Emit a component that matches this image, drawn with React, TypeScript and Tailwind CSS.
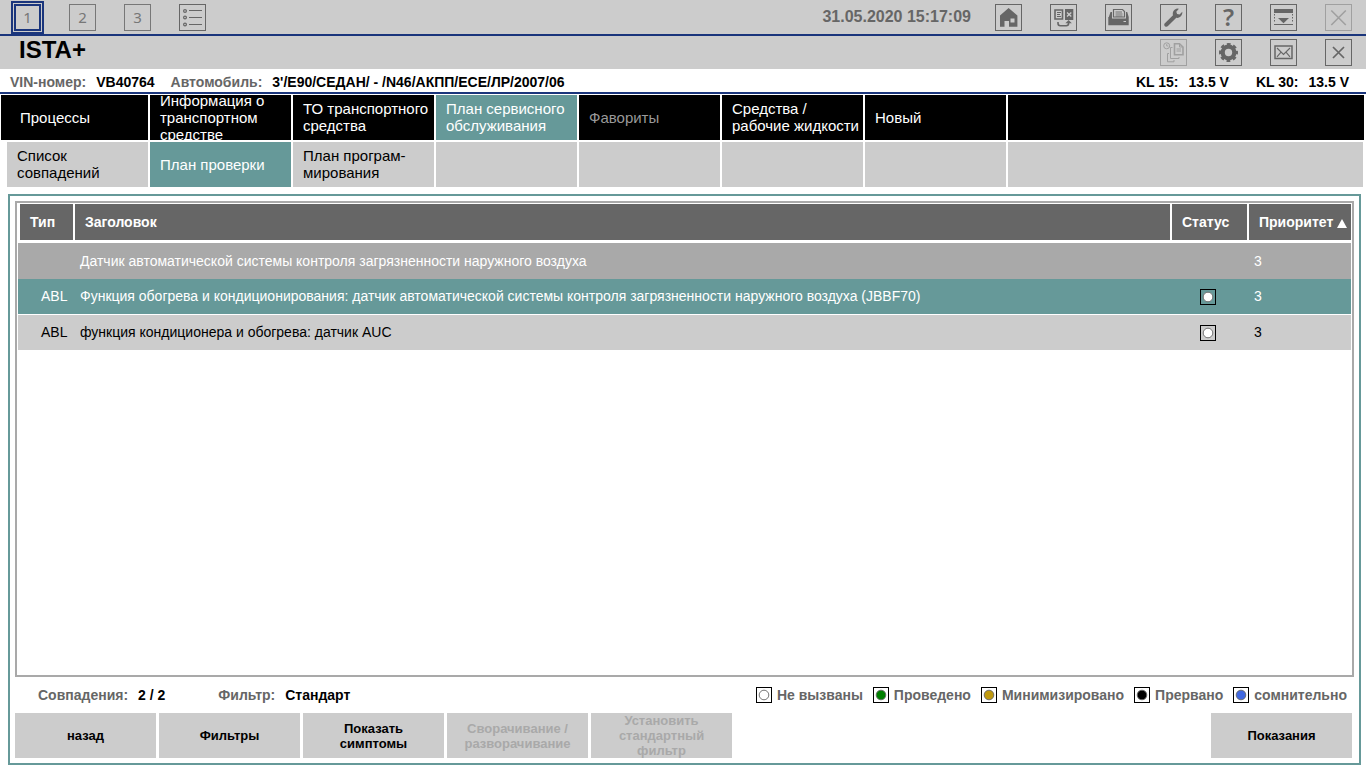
import type { ReactNode } from 'react';
import clsx from 'clsx';

type NavItem = { label: string; active?: boolean; disabled?: boolean };

const mainNav: NavItem[] = [
  { label: 'Процессы' },
  { label: 'Информация о транспортном средстве' },
  { label: 'ТО транспортного средства' },
  { label: 'План сервисного обслуживания', active: true },
  { label: 'Фавориты', disabled: true },
  { label: 'Средства / рабочие жидкости' },
  { label: 'Новый' },
];

const subNav: NavItem[] = [
  { label: 'Список совпадений' },
  { label: 'План проверки', active: true },
  { label: 'План програм-\nмирования' },
];

const rows = [
  { type: '', title: 'Датчик автоматической системы контроля загрязненности наружного воздуха', priority: 3, tone: 'h-9 bg-[#a9a9a9] text-white' },
  {
    type: 'ABL',
    title: 'Функция обогрева и кондиционирования: датчик автоматической системы контроля загрязненности наружного воздуха (JBBF70)',
    priority: 3,
    tone: 'h-9 bg-[#669999] text-white',
  },
  { type: 'ABL', title: 'функция кондиционера и обогрева: датчик AUC', priority: 3, tone: 'h-[35px] bg-[#cccccc] text-black' },
];

const legend = [
  { label: 'Не вызваны', fill: '#ffffff' },
  { label: 'Проведено', fill: '#008000' },
  { label: 'Минимизировано', fill: '#c09a10' },
  { label: 'Прервано', fill: '#000000' },
  { label: 'сомнительно', fill: '#4169e1' },
];

const actions = [
  { label: 'назад' },
  { label: 'Фильтры' },
  { label: 'Показать симптомы' },
  { label: 'Сворачивание / разворачивание', disabled: true },
  { label: 'Установить стандартный фильтр', disabled: true },
];

function IconButton({ label, disabled, children }: { label: string; disabled?: boolean; children: ReactNode }) {
  return (
    <button
      type="button"
      aria-label={label}
      disabled={disabled}
      className={clsx('size-[27px] shrink-0 border', disabled ? 'border-[#a0a0a0] text-[#a0a0a0]' : 'border-[#666666] text-[#666666]')}
    >
      <svg viewBox="1 1 25 25" className="size-[25px]" fill="none" stroke="currentColor">
        {children}
      </svg>
    </button>
  );
}

function StatusDot({ fill }: { fill: string }) {
  return (
    <svg viewBox="0 0 16 16" className="size-4 shrink-0">
      <rect x="0.5" y="0.5" width="15" height="15" fill="none" stroke="#000000" />
      <circle cx="8" cy="8" r="4.8" fill={fill} stroke="#666666" strokeWidth="0.9" />
    </svg>
  );
}

function TopBar() {
  return (
    <div className="flex h-9 items-center justify-between border-b-2 border-[#1a357c] bg-[#cccccc] pr-[14px] pl-[11px]">
      <div className="flex items-center gap-7 font-['Noto_Sans','Open_Sans',sans-serif] text-[15px] text-[#777777]">
        <button type="button" className="-mr-[3px] flex size-[33px] items-center justify-center border-2 border-[#1a357c] p-px">
          <span className="flex size-full items-center justify-center border-2 border-[#1a357c]">1</span>
        </button>
        <button type="button" className="size-[27px] border border-[#777777]">2</button>
        <button type="button" className="size-[27px] border border-[#777777]">3</button>
        <IconButton label="Список">
          <g strokeWidth="1.2">
            <circle cx="6" cy="7" r="1.4" />
            <circle cx="6" cy="13.5" r="1.4" />
            <circle cx="6" cy="20.5" r="1.4" />
            <path d="M10 6.5h13M10 13.5h13M10 20.5h13" strokeWidth="1" />
          </g>
        </IconButton>
      </div>
      <div className="flex items-center gap-7">
        <time className="-mr-1 text-base font-bold text-[#666666]">31.05.2020 15:17:09</time>
        <IconButton label="Домой">
          <path
            d="M13.6 4 22.4 11.5V22.7H14V17H9.5V22.7H5V11.5ZM15.5 14.5V18.5H19.5V14.5Z"
            fill="currentColor"
            fillRule="evenodd"
            stroke="none"
          />
        </IconButton>
        <IconButton label="Сменить операцию">
          <path d="M5 6h7.5v9H5Z" strokeWidth="1.6" />
          <path d="M7 8.5h4M7 10.5h3M7 12.5h4" strokeWidth="1" />
          <path d="M15 5h8.3v11H15Z" fill="currentColor" stroke="none" />
          <path d="m17 8.5 4.3 4M21.3 8.5l-4.3 4" stroke="#cccccc" strokeWidth="1.3" />
          <path d="M8 18v1.3q0 2.4 2.4 2.4h5.8q2.4 0 2.4-2.4V18" strokeWidth="1.6" />
          <path d="m15.4 19.3 3.2-3.2 3.2 3.2Z" fill="currentColor" stroke="none" />
        </IconButton>
        <IconButton label="Печать">
          <path d="M8.5 5.5h9l2 2V13h-11Z" strokeWidth="1.2" />
          <path d="M10.5 8h6.5M10.5 10h7M10.5 12h7" strokeWidth="0.9" />
          <path d="M5.5 8H7v5H3.8ZM21 8h1.2l1.5 5H21Z" fill="currentColor" stroke="none" />
          <path d="M3.3 13H7v1.5h14V13h2.7v8.3H3.3Z" fill="currentColor" stroke="none" />
          <path d="M18.5 17.5h2.5" stroke="#cccccc" />
        </IconButton>
        <IconButton label="Настройки инструмента">
          <path
            d="M4.6 19.4 13 11.3c-.8-3 .8-6 4-6.8l1.9.2-2.6 3.1.8 2.2 2.4.6 2.8-2.8c.4 3.6-2.4 6.6-6 6L7.7 22.3c-2 1.4-4.4-.9-3.1-2.9Z"
            fill="currentColor"
            stroke="none"
          />
        </IconButton>
        <button
          type="button"
          aria-label="Справка"
          className="flex size-[27px] shrink-0 items-center justify-center border border-[#666666] font-['Noto_Sans',sans-serif] text-2xl font-semibold text-[#666666]"
        >
          ?
        </button>
        <IconButton label="Свернуть">
          <path d="M4 5h19v4H4Z" fill="currentColor" stroke="none" />
          <path d="M4.5 10v9M22.5 10v9" strokeDasharray="1.5 1.5" />
          <path d="M8 14h11l-5.5 5.2Z" fill="currentColor" stroke="none" />
          <path d="M4 20.5h19" />
        </IconButton>
        <IconButton label="Закрыть программу" disabled>
          <path d="m6.3 6.5 14.5 14.5M20.8 6.5 6.3 21" strokeWidth="1.6" />
        </IconButton>
      </div>
    </div>
  );
}

function TitleBar() {
  return (
    <div className="flex h-[33px] items-center justify-between bg-[#cccccc] pr-[14px] pl-[19px]">
      <h1 className="-mt-1.5 text-2xl leading-7 font-bold">ISTA+</h1>
      <div className="flex items-center gap-7">
        <IconButton label="Документы операции" disabled>
          <circle cx="6.7" cy="6.8" r="3" />
          <path d="M6.7 5V7H8.3" strokeWidth="0.9" />
          <path d="M14.5 4.7h5l3.5 3.3v7.7h-8.5Z" strokeWidth="1.6" />
          <path d="M19.5 4.7V8H23M16.5 10h4.5M16.5 12h4.5" strokeWidth="1" />
          <path d="M12.5 8.5h-2v11H19V18M9 14.5H7.5v8.3H14V21" />
        </IconButton>
        <IconButton label="Настройки">
          <circle cx="13.5" cy="13.5" r="5.8" strokeWidth="4.2" />
          <circle cx="13.5" cy="13.5" r="8" strokeWidth="3" strokeDasharray="3.6 2.68" strokeDashoffset="1.8" />
        </IconButton>
        <IconButton label="Сообщения">
          <path d="M5 7h17v12.5H5Z" strokeWidth="1.5" />
          <path d="m7 9 6.5 6.5L20 9M7 17.8l3.8-4.5M20 17.8l-3.8-4.5" strokeWidth="1.1" />
        </IconButton>
        <IconButton label="Закрыть">
          <path d="m8 8 11 11M19 8 8 19" strokeWidth="1.7" />
        </IconButton>
      </div>
    </div>
  );
}

function VehicleBar() {
  return (
    <div className="flex h-[25px] items-center justify-between border-b-2 border-[#1a357c] pt-0.5 pr-[17px] pl-[10px] text-sm font-bold">
      <div className="flex">
        <span className="text-[#666666]">VIN-номер:</span>
        <span className="ml-[10px]">VB40764</span>
        <span className="ml-4 text-[#666666]">Автомобиль:</span>
        <span className="ml-[10px]">3'/E90/СЕДАН/ - /N46/АКПП/ECE/ЛР/2007/06</span>
      </div>
      <div className="flex">
        <span>KL 15:</span>
        <span className="ml-[10px]">13.5 V</span>
        <span className="ml-[27px]">KL 30:</span>
        <span className="ml-[10px]">13.5 V</span>
      </div>
    </div>
  );
}

function NavCell({ item, tone, className = 'w-[141px] pl-[10px]' }: { item: NavItem; tone: string; className?: string }) {
  return (
    <button
      type="button"
      disabled={item.disabled}
      className={clsx(
        'flex h-[45px] shrink-0 items-center overflow-hidden pb-px text-left text-[15px] leading-[17px] whitespace-pre-line',
        className,
        item.active ? 'bg-[#669999] text-white' : tone,
        item.disabled && 'text-[#999999]',
      )}
    >
      {item.label}
    </button>
  );
}

function Navigation() {
  return (
    <nav className="mt-px flex flex-col gap-0.5 pr-[3px]">
      <div className="-mr-px flex gap-0.5 pl-px">
        <NavCell item={mainNav[0]} tone="bg-black text-white" className="w-[147px] pl-[19px]" />
        {mainNav.slice(1).map((item) => (
          <NavCell key={item.label} item={item} tone={item.disabled ? 'bg-black' : 'bg-black text-white'} />
        ))}
        <div className="flex-1 bg-black" />
      </div>
      <div className="flex gap-0.5 pl-[7px]">
        {subNav.map((item) => (
          <NavCell key={item.label} item={item} tone="bg-[#cccccc] text-black" />
        ))}
        {[0, 1, 2, 3].map((n) => (
          <div key={n} className="w-[141px] shrink-0 bg-[#cccccc]" />
        ))}
        <div className="flex-1 bg-[#cccccc]" />
      </div>
    </nav>
  );
}

function PlanTable() {
  const th = 'h-[39px] border-b-[3px] border-l-2 border-white bg-[#666666] pl-[10px] text-left font-bold text-white';
  return (
    <div className="flex-1 border-2 border-[#a9a9a9] p-px">
      <table className="w-full table-fixed border-separate border-spacing-0 text-sm leading-5">
        <thead>
          <tr>
            <th className={clsx(th, 'w-[55px]')}>Тип</th>
            <th className={th}>Заголовок</th>
            <th className={clsx(th, 'w-[77px]')}>Статус</th>
            <th className={clsx(th, 'w-[104px]')}>
              <div className="flex items-center gap-1">
                Приоритет
                <svg viewBox="0 0 10 9" className="mt-0.5 h-[9px] w-[10px] shrink-0">
                  <path d="M5 0 10 9H0Z" fill="#ffffff" />
                </svg>
              </div>
            </th>
          </tr>
        </thead>
        <tbody>
          {rows.map((row, i) => {
            const line = i === 1 && 'border-b border-white';
            const cell = clsx(line, i > 0 && 'pb-px');
            return (
              <tr key={row.title} className={row.tone}>
                <td className={clsx(cell, 'pl-[23px]')}>{row.type}</td>
                <td className={clsx(cell, 'pl-[7px]')}>{row.title}</td>
                <td className={clsx(line, 'pl-[30px]')}>{row.type && <StatusDot fill="#ffffff" />}</td>
                <td className={clsx(cell, 'pl-[7px]')}>{row.priority}</td>
              </tr>
            );
          })}
        </tbody>
      </table>
    </div>
  );
}

function ActionButton({ label, disabled }: { label: string; disabled?: boolean }) {
  return (
    <button
      type="button"
      disabled={disabled}
      className={clsx(
        'flex h-[45px] w-[141px] items-center justify-center overflow-hidden bg-[#cccccc] px-3 text-center text-[13px] leading-[15px] font-bold',
        disabled ? 'text-[#a9a9a9]' : 'text-black',
      )}
    >
      {label}
    </button>
  );
}

export default function App() {
  return (
    <div className="flex min-h-screen flex-col bg-white font-['Liberation_Sans',Arial,sans-serif] text-black">
      <header>
        <TopBar />
        <TitleBar />
        <VehicleBar />
      </header>
      <Navigation />
      <main className="mt-[7px] mr-[5px] mb-[3px] ml-2 flex flex-1 flex-col border-2 border-[#669999] p-[5px]">
        <PlanTable />
        <div className="flex h-9 items-center justify-between pr-[7px] pl-[23px] text-sm font-bold text-[#666666]">
          <div className="flex">
            <span>Совпадения:</span>
            <span className="ml-[10px] text-black">2 / 2</span>
            <span className="ml-[53px]">Фильтр:</span>
            <span className="ml-[10px] text-black">Стандарт</span>
          </div>
          <ul className="flex gap-[10px]">
            {legend.map((item) => (
              <li key={item.label} className="flex items-center gap-[5px]">
                <StatusDot fill={item.fill} />
                {item.label}
              </li>
            ))}
          </ul>
        </div>
        <div className="flex justify-between pr-0.5">
          <div className="flex gap-[3px]">
            {actions.map((action) => (
              <ActionButton key={action.label} {...action} />
            ))}
          </div>
          <ActionButton label="Показания" />
        </div>
      </main>
    </div>
  );
}
